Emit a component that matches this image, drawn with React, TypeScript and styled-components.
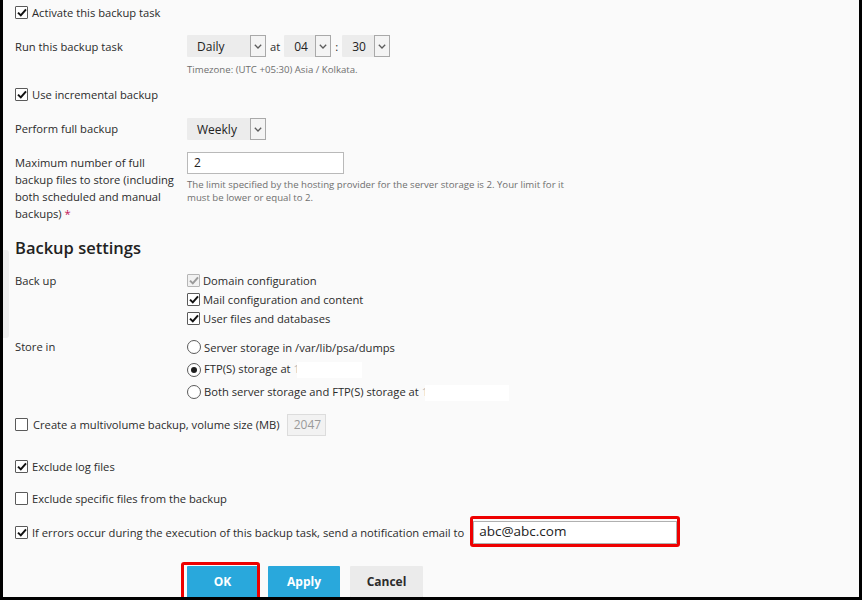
import React, { FC, ReactNode } from 'react';
import styled, { createGlobalStyle } from 'styled-components';

const GlobalStyle = createGlobalStyle`
  html, body {
    margin: 0;
    padding: 0;
    background: #ffffff;
  }
  * {
    box-sizing: border-box;
  }
`;

const Frame = styled.div`
  position: relative;
  width: 862px;
  height: 600px;
  border: 3px solid #000;
  border-top: none;
  background: #fafafa;
  overflow: hidden;
  font-family: 'Open Sans', 'DejaVu Sans', sans-serif;
  font-size: 11.2px;
  color: #2b2b2b;
  padding-left: 12px;
`;

const SideTab = styled.div`
  position: absolute;
  left: 0;
  top: 250px;
  width: 6px;
  height: 88px;
  background: #ededed;
  border-radius: 0 3px 3px 0;
`;

const Block = styled.div<{ $mt: number }>`
  margin-top: ${(p) => p.$mt}px;
`;

const Row = styled.div<{ $mt: number; $h?: number }>`
  display: grid;
  grid-template-columns: 172px 1fr;
  align-items: start;
  margin-top: ${(p) => p.$mt}px;
  min-height: ${(p) => p.$h ?? 17}px;
`;

const Label = styled.div<{ $lh?: number; $pt?: number }>`
  line-height: ${(p) => p.$lh ?? 22}px;
  padding-top: ${(p) => p.$pt ?? 0}px;
`;

const Field = styled.div`
  display: flex;
  flex-direction: column;
`;

const Inline = styled.div`
  display: flex;
  align-items: center;
  gap: 4px;
  height: 22px;
`;

const Check = styled.label<{ $h: number; $gap?: number }>`
  display: flex;
  align-items: center;
  gap: ${(p) => p.$gap ?? 4}px;
  height: ${(p) => p.$h}px;
  white-space: nowrap;
`;

const Box = styled.span<{ $disabled?: boolean }>`
  display: inline-flex;
  align-items: center;
  justify-content: center;
  width: 13px;
  height: 13px;
  flex: none;
  border: 1px solid ${(p) => (p.$disabled ? '#b5b5b5' : '#5a5a5a')};
  background: ${(p) => (p.$disabled ? '#f1f1f1' : '#fff')};
  border-radius: 1px;
`;

const Radio = styled.span<{ $on?: boolean }>`
  display: inline-flex;
  align-items: center;
  justify-content: center;
  width: 14px;
  height: 14px;
  flex: none;
  border: 1px solid #5a5a5a;
  border-radius: 50%;
  background: #fff;
  &::after {
    content: '';
    display: ${(p) => (p.$on ? 'block' : 'none')};
    width: 6px;
    height: 6px;
    border-radius: 50%;
    background: #1e1e1e;
  }
`;

const SelectBox = styled.div<{ $w: number }>`
  display: flex;
  width: ${(p) => p.$w}px;
  height: 22px;
  background: #ececec;
  border-radius: 1px;
`;

const SelectValue = styled.span`
  flex: 1;
  padding-left: 10px;
  line-height: 23px;
  font-size: 12px;
  color: #222;
`;

const SelectArrow = styled.span`
  display: flex;
  align-items: center;
  justify-content: center;
  width: 16px;
  border: 1px solid #a9a9a9;
  background: #f4f4f4;
`;

const Hint = styled.div<{ $mt: number }>`
  margin-top: ${(p) => p.$mt}px;
  font-size: 9.65px;
  line-height: 13px;
  color: #6f6f6f;
`;

const TextInput = styled.div<{ $w: number; $h: number; $muted?: boolean }>`
  width: ${(p) => p.$w}px;
  height: ${(p) => p.$h}px;
  border: 1px solid ${(p) => (p.$muted ? '#dcdcdc' : '#b9b9b9')};
  background: ${(p) => (p.$muted ? '#f2f2f2' : '#fff')};
  color: ${(p) => (p.$muted ? '#9a9a9a' : '#222')};
  padding-left: 6px;
  line-height: ${(p) => p.$h - 2}px;
  font-size: 12px;
`;

const EmailInput = styled(TextInput)`
  font-size: 13.5px;
  padding-left: 5px;
  border-color: #b0b0b0;
  line-height: 18px;
`;

const Heading = styled.h2<{ $mt: number }>`
  margin: ${(p) => p.$mt}px 0 0;
  font-size: 16.5px;
  font-weight: 600;
  line-height: 22px;
  color: #222;
`;

const Stack = styled.div<{ $rh: number }>`
  display: flex;
  flex-direction: column;
  & > * {
    height: ${(p) => p.$rh}px;
  }
`;

const Redact = styled.span<{ $w: number }>`
  display: inline-block;
  width: ${(p) => p.$w}px;
  height: 16px;
  background: #fff;
  margin-left: -3px;
  vertical-align: middle;
`;

const Faint = styled.span`
  color: #b8b8b8;
`;

const Required = styled.span`
  color: #c2185b;
`;

const Marked = styled.span<{ $ml?: number }>`
  position: relative;
  display: inline-flex;
  margin-left: ${(p) => p.$ml ?? 0}px;
`;

const RedMark = styled.span<{ $t: number; $l: number; $r: number; $b: number }>`
  position: absolute;
  top: ${(p) => p.$t}px;
  left: ${(p) => p.$l}px;
  right: ${(p) => p.$r}px;
  bottom: ${(p) => p.$b}px;
  border: 3px solid #ee0000;
  border-radius: 3px;
  pointer-events: none;
`;

const Buttons = styled.div`
  display: flex;
  gap: 10px;
  margin-top: 22px;
  padding-left: 172px;
`;

const Button = styled.button<{ $primary?: boolean; $w: number }>`
  width: ${(p) => p.$w}px;
  height: 32px;
  border: none;
  border-radius: 1px;
  font-family: 'Open Sans', 'DejaVu Sans', sans-serif;
  font-size: 12px;
  font-weight: 700;
  background: ${(p) => (p.$primary ? '#29a8dc' : '#ebebeb')};
  color: ${(p) => (p.$primary ? '#fff' : '#2b2b2b')};
  box-shadow: ${(p) => (p.$primary ? 'none' : 'inset 0 -1px 0 #d6d6d6')};
`;

const Tick: FC<{ color?: string }> = ({ color = '#111' }) => (
  <svg width="10" height="9" viewBox="0 0 10 9">
    <path d="M1 4.6 L3.8 7.4 L9 1.4" fill="none" stroke={color} strokeWidth="2" />
  </svg>
);

const Chevron: FC = () => (
  <svg width="8" height="5" viewBox="0 0 8 5">
    <path d="M0.8 0.8 L4 4 L7.2 0.8" fill="none" stroke="#5c5c5c" strokeWidth="1.3" />
  </svg>
);

const CheckItem: FC<{
  checked?: boolean;
  disabled?: boolean;
  h?: number;
  gap?: number;
  children: ReactNode;
}> = ({ checked, disabled, h = 17, gap, children }) => (
  <Check $h={h} $gap={gap}>
    <Box $disabled={disabled}>{checked && <Tick color={disabled ? '#9a9a9a' : '#111'} />}</Box>
    <span>{children}</span>
  </Check>
);

const RadioItem: FC<{ on?: boolean; children: ReactNode }> = ({ on, children }) => (
  <Check $h={22.5} $gap={3}>
    <Radio $on={on} />
    <span>{children}</span>
  </Check>
);

const Select: FC<{ w: number; value: string }> = ({ w, value }) => (
  <SelectBox $w={w}>
    <SelectValue>{value}</SelectValue>
    <SelectArrow>
      <Chevron />
    </SelectArrow>
  </SelectBox>
);

const App: FC = () => (
  <>
    <GlobalStyle />
    <Frame>
      <SideTab />

      <Block $mt={4}>
        <CheckItem checked>Activate this backup task</CheckItem>
      </Block>

      <Row $mt={14} $h={22}>
        <Label $pt={1}>Run this backup task</Label>
        <Field>
          <Inline>
            <Select w={79} value="Daily" />
            <span>at</span>
            <Select w={47} value="04" />
            <span>:</span>
            <Select w={48} value="30" />
          </Inline>
          <Hint $mt={6}>Timezone: (UTC +05:30) Asia / Kolkata.</Hint>
        </Field>
      </Row>

      <Block $mt={10}>
        <CheckItem checked>Use incremental backup</CheckItem>
      </Block>

      <Row $mt={15} $h={22}>
        <Label>Perform full backup</Label>
        <Field>
          <Select w={79} value="Weekly" />
        </Field>
      </Row>

      <Row $mt={12}>
        <Label $lh={17} $pt={2}>
          Maximum number of full
          <br />
          backup files to store (including
          <br />
          both scheduled and manual
          <br />
          backups) <Required>*</Required>
        </Label>
        <Field>
          <TextInput $w={157} $h={22}>
            2
          </TextInput>
          <Hint $mt={4}>
            The limit specified by the hosting provider for the server storage is 2. Your limit for it
            <br />
            must be lower or equal to 2.
          </Hint>
        </Field>
      </Row>

      <Heading $mt={15}>Backup settings</Heading>

      <Row $mt={12}>
        <Label $lh={19}>Back up</Label>
        <Stack $rh={19}>
          <CheckItem checked disabled gap={3} h={19}>
            Domain configuration
          </CheckItem>
          <CheckItem checked gap={3} h={19}>
            Mail configuration and content
          </CheckItem>
          <CheckItem checked gap={3} h={19}>
            User files and databases
          </CheckItem>
        </Stack>
      </Row>

      <Row $mt={8}>
        <Label $lh={22.5}>Store in</Label>
        <Stack $rh={22.5}>
          <RadioItem>Server storage in /var/lib/psa/dumps</RadioItem>
          <RadioItem on>
            FTP(S) storage at <Faint>1</Faint>
            <Redact $w={65} />
          </RadioItem>
          <RadioItem>
            Both server storage and FTP(S) storage at <Faint>1</Faint>
            <Redact $w={84} />
          </RadioItem>
        </Stack>
      </Row>

      <Block $mt={10}>
        <Inline>
          <CheckItem h={22} gap={5}>
            Create a multivolume backup, volume size (MB)
          </CheckItem>
          <Marked $ml={3}>
            <TextInput $w={39} $h={22} $muted>
              2047
            </TextInput>
          </Marked>
        </Inline>
      </Block>

      <Block $mt={22}>
        <CheckItem checked>Exclude log files</CheckItem>
      </Block>

      <Block $mt={15}>
        <CheckItem>Exclude specific files from the backup</CheckItem>
      </Block>

      <Block $mt={14}>
        <Check $h={23} $gap={4}>
          <Box>
            <Tick />
          </Box>
          <span>If errors occur during the execution of this backup task, send a notification email to</span>
          <Marked $ml={5}>
            <EmailInput $w={204} $h={23}>
              abc@abc.com
            </EmailInput>
            <RedMark $t={-5} $l={-3} $r={-3} $b={-3} />
          </Marked>
        </Check>
      </Block>

      <Buttons>
        <Marked>
          <Button $primary $w={71}>
            OK
          </Button>
          <RedMark $t={-4} $l={-6} $r={-2} $b={-3} />
        </Marked>
        <Button $primary $w={72}>
          Apply
        </Button>
        <Button $w={73}>Cancel</Button>
      </Buttons>
    </Frame>
  </>
);

export default App;
